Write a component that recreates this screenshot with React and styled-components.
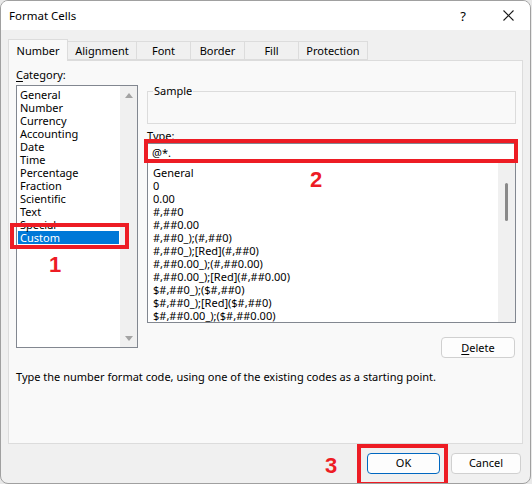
import React from 'react';
import styled, { createGlobalStyle } from 'styled-components';

const GlobalStyle = createGlobalStyle`
  html, body {
    margin: 0;
    padding: 0;
    background: #e9e9e9;
  }
  body {
    font-family: "Noto Sans", "Segoe UI", sans-serif;
    font-size: 11px;
    color: #000;
  }
  * {
    box-sizing: border-box;
  }
`;

const Window = styled.div`
  position: relative;
  width: 531px;
  height: 484px;
  background: #f0f0f0;
  border: 1px solid #a0a0a0;
  border-radius: 8px;
  overflow: hidden;
  display: flex;
  flex-direction: column;
`;

const TitleBar = styled.div`
  height: 29px;
  background: #fff;
  display: flex;
  align-items: center;
  padding-left: 8px;
  flex-shrink: 0;
`;

const Title = styled.div`
  flex: 1;
  font-size: 11.5px;
  line-height: 14px;
`;

const Help = styled.div`
  width: 14px;
  font-size: 13px;
  text-align: center;
  margin-right: 32px;
`;

const Close = styled.div`
  width: 12px;
  height: 12px;
  margin-right: 16px;
  display: flex;
  align-items: center;
  justify-content: center;
`;

const TabRow = styled.div`
  display: flex;
  align-items: flex-end;
  height: 21px;
  margin-top: 9px;
  padding-left: 7px;
  position: relative;
  z-index: 1;
  flex-shrink: 0;
`;

const Tab = styled.div`
  width: ${(p) => p.w}px;
  height: ${(p) => (p.active ? 22 : 19)}px;
  margin-bottom: ${(p) => (p.active ? -1 : 0)}px;
  background: ${(p) => (p.active ? '#f9f9f9' : '#f0f0f0')};
  border: 1px solid #dcdcdc;
  border-bottom: ${(p) => (p.active ? 'none' : '1px solid #dcdcdc')};
  border-left: ${(p) => (p.first ? '1px solid #dcdcdc' : 'none')};
  display: flex;
  align-items: center;
  justify-content: center;
  padding-top: ${(p) => (p.active ? 0 : 1)}px;
  line-height: 14px;
`;

const Panel = styled.div`
  margin: 0 7px;
  height: 384px;
  background: #f9f9f9;
  border: 1px solid #dcdcdc;
  padding: 7px 6px 0 7px;
  flex-shrink: 0;
`;

const Columns = styled.div`
  display: flex;
  gap: 9px;
`;

const LeftCol = styled.div`
  width: 122px;
  display: flex;
  flex-direction: column;
`;

const RightCol = styled.div`
  width: 369px;
  display: flex;
  flex-direction: column;
`;

const Label = styled.div`
  line-height: 14px;
  height: 14px;
`;

const U = styled.span`
  text-decoration: underline;
  text-underline-offset: 2px;
`;

const ListBox = styled.div`
  display: flex;
  height: ${(p) => p.h}px;
  margin-top: ${(p) => p.mt || 0}px;
  background: #fff;
  border: 1px solid #828790;
  overflow: hidden;
`;

const Items = styled.div`
  flex: 1;
  padding: ${(p) => p.pad};
  overflow: hidden;
`;

const Item = styled.div`
  line-height: 13px;
  height: 13px;
  padding-left: 2px;
  white-space: nowrap;
  background: ${(p) => (p.selected ? '#0078d7' : 'transparent')};
  color: ${(p) => (p.selected ? '#fff' : '#000')};
`;

const ScrollTrack = styled.div`
  width: 17px;
  background: #f0f0f0;
  display: flex;
  flex-direction: column;
  align-items: center;
  justify-content: ${(p) => (p.arrows ? 'space-between' : 'flex-start')};
  padding: ${(p) => (p.arrows ? '7px 0 6px' : '20px 0 0')};
`;

const Arrow = styled.div`
  width: 0;
  height: 0;
  border-left: 4px solid transparent;
  border-right: 4px solid transparent;
  ${(p) => (p.down ? 'border-top: 5px solid #a3a3a3;' : 'border-bottom: 5px solid #a3a3a3;')}
`;

const Thumb = styled.div`
  width: 3px;
  height: 38px;
  border-radius: 2px;
  background: #8a8a8a;
`;

const Sample = styled.fieldset`
  margin: 16px 0 0;
  padding: 0 5px;
  height: 40px;
  border: 1px solid #dcdcdc;
  min-width: 0;
`;

const Legend = styled.legend`
  padding: 0 1px;
  line-height: 14px;
`;

const TypeLabel = styled(Label)`
  margin-top: 5px;
`;

const TypeInput = styled.div`
  height: 19px;
  background: #fff;
  border: 1px solid #828790;
  border-bottom: none;
  padding-left: 4px;
  line-height: 18px;
`;

const ButtonRow = styled.div`
  display: flex;
  justify-content: flex-end;
  margin-top: 14px;
  padding-right: 1px;
`;

const Button = styled.div`
  width: ${(p) => p.w}px;
  height: 21px;
  background: #fdfdfd;
  border: 1px solid ${(p) => (p.primary ? '#0067c0' : '#d0d0d0')};
  border-radius: 4px;
  display: flex;
  align-items: center;
  justify-content: center;
  line-height: 14px;
`;

const Description = styled.div`
  margin-top: 12px;
  line-height: 14px;
`;

const Footer = styled.div`
  flex: 1;
  display: flex;
  align-items: center;
  justify-content: flex-end;
  gap: 11px;
  padding: 0 9px 1px 0;
`;

const Mark = styled.div`
  position: absolute;
  left: ${(p) => p.x}px;
  top: ${(p) => p.y}px;
  width: ${(p) => p.w}px;
  height: ${(p) => p.h}px;
  border: 4px solid #ed1c24;
  z-index: 5;
`;

const Num = styled.div`
  position: absolute;
  left: ${(p) => p.x}px;
  top: ${(p) => p.y}px;
  font-family: "Liberation Sans", Arial, sans-serif;
  font-weight: bold;
  font-size: 22px;
  line-height: 22px;
  color: #ed1c24;
  z-index: 5;
`;

const tabs = [
  ['Number', 60],
  ['Alignment', 69],
  ['Font', 54],
  ['Border', 54],
  ['Fill', 54],
  ['Protection', 69],
];

const categories = [
  'General', 'Number', 'Currency', 'Accounting', 'Date', 'Time',
  'Percentage', 'Fraction', 'Scientific', 'Text', 'Special', 'Custom',
];

const formats = [
  'General',
  '0',
  '0.00',
  '#,##0',
  '#,##0.00',
  '#,##0_);(#,##0)',
  '#,##0_);[Red](#,##0)',
  '#,##0.00_);(#,##0.00)',
  '#,##0.00_);[Red](#,##0.00)',
  '$#,##0_);($#,##0)',
  '$#,##0_);[Red]($#,##0)',
  '$#,##0.00_);($#,##0.00)',
  '$#,##0.00_);[Red]($#,##0.00)',
];

export default function App() {
  return (
    <>
      <GlobalStyle />
      <Window>
        <TitleBar>
          <Title>Format Cells</Title>
          <Help>?</Help>
          <Close>
            <svg width="11" height="11" viewBox="0 0 11 11">
              <path d="M0.5 0.5 L10.5 10.5 M10.5 0.5 L0.5 10.5" stroke="#1b1b1b" strokeWidth="1.1" />
            </svg>
          </Close>
        </TitleBar>

        <TabRow>
          {tabs.map(([name, w], i) => (
            <Tab key={name} w={w} active={i === 0} first={i === 0}>
              {name}
            </Tab>
          ))}
        </TabRow>

        <Panel>
          <Columns>
            <LeftCol>
              <Label>
                <U>C</U>ategory:
              </Label>
              <ListBox h={263} mt={3}>
                <Items pad="2px 1px 0 1px">
                  {categories.map((c) => (
                    <Item key={c} selected={c === 'Custom'}>
                      {c}
                    </Item>
                  ))}
                </Items>
                <ScrollTrack arrows>
                  <Arrow />
                  <Arrow down />
                </ScrollTrack>
              </ListBox>
            </LeftCol>

            <RightCol>
              <Sample>
                <Legend>Sample</Legend>
              </Sample>
              <TypeLabel>
                <U>T</U>ype:
              </TypeLabel>
              <TypeInput>@*.</TypeInput>
              <ListBox h={161}>
                <Items pad="3px 0 0 3px">
                  {formats.map((f) => (
                    <Item key={f}>{f}</Item>
                  ))}
                </Items>
                <ScrollTrack>
                  <Thumb />
                </ScrollTrack>
              </ListBox>
              <ButtonRow>
                <Button w={74}>
                  <span>
                    <U>D</U>elete
                  </span>
                </Button>
              </ButtonRow>
            </RightCol>
          </Columns>
          <Description>
            Type the number format code, using one of the existing codes as a starting point.
          </Description>
        </Panel>

        <Footer>
          <Button w={73} primary>OK</Button>
          <Button w={70}>Cancel</Button>
        </Footer>

        <Mark x={9} y={222} w={119} h={26} />
        <Num x={48} y={253}>1</Num>
        <Mark x={143} y={138} w={374} h={24} />
        <Num x={309} y={168}>2</Num>
        <Mark x={356} y={443} w={91} h={42} />
        <Num x={324} y={454}>3</Num>
      </Window>
    </>
  );
}
